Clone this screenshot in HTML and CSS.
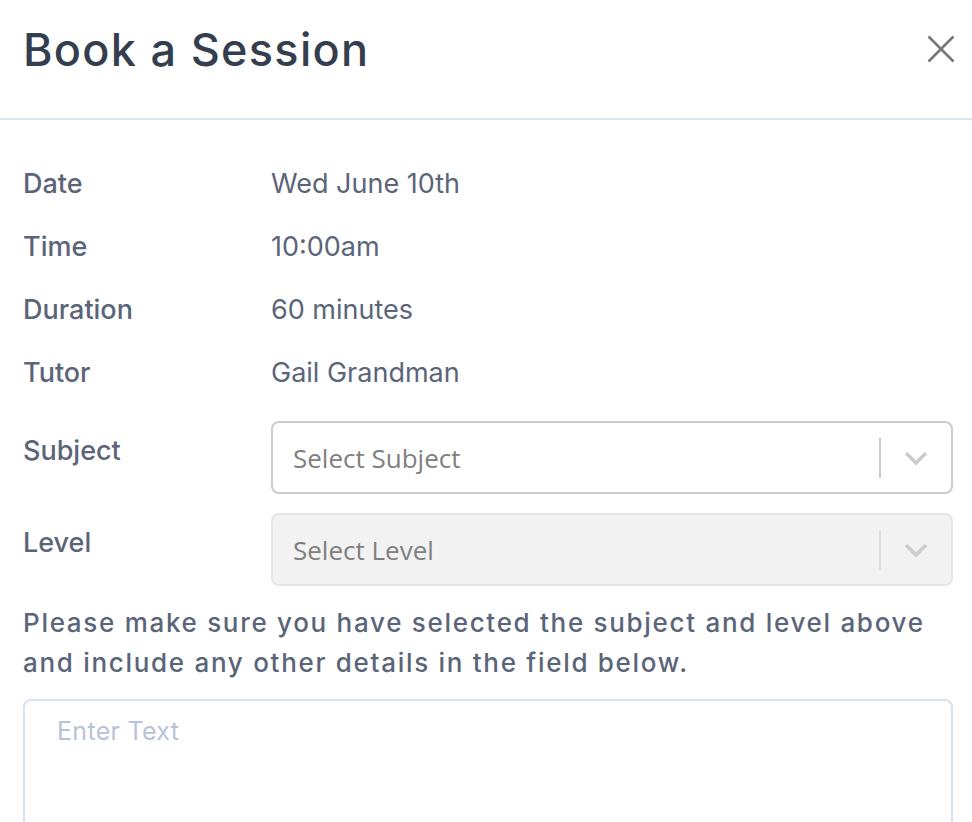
FILE: index.html
```html
<!DOCTYPE html>
<html lang="en">
<head>
    <meta charset="UTF-8">
    <meta name="viewport" content="width=device-width, initial-scale=1.0">
    <title>Book a Session</title>
    <link rel="stylesheet" href="styles.css">
</head>
<body>

<div class="modal">
    <!-- Header with title and close button -->
    <header class="modal-header">
        <h1>Book a Session</h1>
        <button class="close-button" aria-label="Close">
            <svg width="28" height="28" viewBox="0 0 28 28">
                <path d="M1.5 1.5 L26.5 26.5 M26.5 1.5 L1.5 26.5" stroke="#777" stroke-width="2.6" fill="none"/>
            </svg>
        </button>
    </header>

    <div class="modal-body">
        <!-- Session details -->
        <div class="details">
            <div class="detail-row"><span class="label">Date</span><span class="value">Wed June 10th</span></div>
            <div class="detail-row"><span class="label">Time</span><span class="value">10:00am</span></div>
            <div class="detail-row"><span class="label">Duration</span><span class="value">60 minutes</span></div>
            <div class="detail-row"><span class="label">Tutor</span><span class="value">Gail Grandman</span></div>
        </div>

        <!-- Dropdowns -->
        <div class="field-row">
            <span class="label field-label">Subject</span>
            <div class="select">
                <span class="select-placeholder">Select Subject</span>
                <span class="select-separator"></span>
                <span class="select-arrow">
                    <svg width="24" height="14" viewBox="0 0 24 14">
                        <path d="M2 2 L12 12 L22 2" stroke="#ccc" stroke-width="3.6" fill="none"/>
                    </svg>
                </span>
            </div>
        </div>
        <div class="field-row">
            <span class="label field-label">Level</span>
            <div class="select disabled">
                <span class="select-placeholder">Select Level</span>
                <span class="select-separator"></span>
                <span class="select-arrow">
                    <svg width="24" height="14" viewBox="0 0 24 14">
                        <path d="M2 2 L12 12 L22 2" stroke="#ccc" stroke-width="3.6" fill="none"/>
                    </svg>
                </span>
            </div>
        </div>

        <p class="note">Please make sure you have selected the subject and level above and include any other details in the field below.</p>

        <textarea class="details-input" placeholder="Enter Text"></textarea>
    </div>
</div>

</body>
</html>
```

FILE: styles.css
```css
body {
    margin: 0;
    padding: 0;
    background-color: #fff;
    font-family: Inter, "Noto Sans", sans-serif;
    color: #5b6579;
}

.modal {
    width: 972px;
}

.modal-header {
    display: flex;
    align-items: center;
    justify-content: space-between;
    height: 118px;
    padding: 0 17px 0 23px;
    border-bottom: 2px solid #dde5ef;
}

.modal-header h1 {
    margin: 0 0 20px 0;
    font-size: 45px;
    font-weight: 500;
    color: #343e4f;
    letter-spacing: 1.3px;
}

.close-button {
    background: none;
    border: none;
    padding: 0;
    margin-bottom: 20px;
    cursor: pointer;
    display: flex;
}

.modal-body {
    padding: 32px 19px 0 23px;
}

.details {
    margin-bottom: 17px;
}

.detail-row {
    display: grid;
    grid-template-columns: 248px 1fr;
    height: 63px;
    align-items: center;
}

.label {
    font-size: 27px;
    font-weight: 500;
    color: #5b6579;
}

.value {
    font-size: 27px;
    font-weight: 400;
    color: #5b6579;
}

.field-row {
    display: grid;
    grid-template-columns: 248px 1fr;
    margin-bottom: 19px;
}

.field-label {
    padding-top: 13px;
}

.select {
    display: flex;
    align-items: center;
    height: 69px;
    border: 2px solid #ccc;
    border-radius: 8px;
    background-color: #fff;
}

.select.disabled {
    background-color: #f2f2f2;
    border-color: #e6e6e6;
}

.select-placeholder {
    flex: 1;
    padding-left: 20px;
    font-family: "Open Sans", sans-serif;
    font-size: 26px;
    color: #808080;
}

.select-separator {
    width: 2px;
    height: 40px;
    background-color: #ccc;
}

.select.disabled .select-separator {
    background-color: #e0e0e0;
}

.select-arrow {
    display: flex;
    padding: 0 23px;
}

.note {
    max-width: 930px;
    margin: -2px 0 16px 0;
    font-size: 26px;
    font-weight: 500;
    line-height: 40px;
    letter-spacing: 1.7px;
    color: #5b6579;
}

.details-input {
    display: block;
    box-sizing: border-box;
    width: 930px;
    height: 200px;
    padding: 15px 32px;
    border: 2px solid #d8e1ec;
    border-radius: 8px;
    font-family: Inter, "Noto Sans", sans-serif;
    font-size: 25px;
    letter-spacing: 0.3px;
    resize: none;
    outline: none;
}

.details-input::placeholder {
    color: #b8c3d6;
}
```
